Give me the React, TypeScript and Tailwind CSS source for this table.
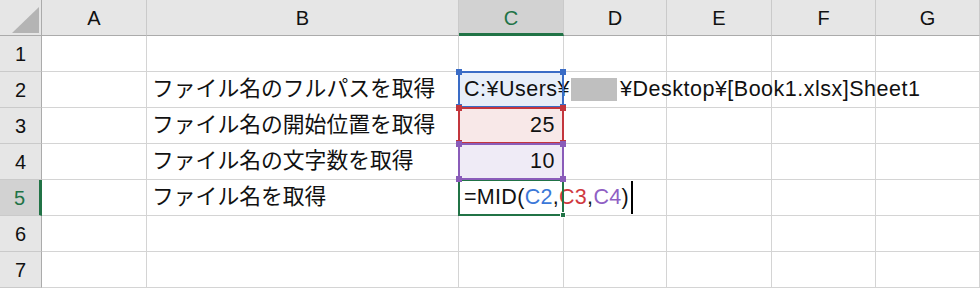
const cols = ["A", "B", "C", "D", "E", "F", "G"];
const rows = [1, 2, 3, 4, 5, 6, 7];

const labels: Record<number, string> = {
  2: "ファイル名のフルパスを取得",
  3: "ファイル名の開始位置を取得",
  4: "ファイル名の文字数を取得",
  5: "ファイル名を取得",
};

// coloured range box drawn over a referenced cell, with its four corner handles
function RangeBox({ border, handle }: { border: string; handle: string }) {
  return (
    <div className={`pointer-events-none absolute -inset-px z-10 border-2 ${border}`}>
      <span className={`absolute -left-[4px] -top-[4px] h-[6px] w-[6px] ${handle}`} />
      <span className={`absolute -right-[4px] -top-[4px] h-[6px] w-[6px] ${handle}`} />
      <span className={`absolute -bottom-[4px] -left-[4px] h-[6px] w-[6px] ${handle}`} />
      <span className={`absolute -bottom-[4px] -right-[4px] h-[6px] w-[6px] ${handle}`} />
    </div>
  );
}

function CellC({ row }: { row: number }) {
  if (row === 2) {
    return (
      <div className="relative flex items-center whitespace-nowrap border-b border-r border-[#d4d4d4] bg-[#e7eef9] pl-[5px] tracking-[0.5px]">
        <span className="shrink-0">C:¥Users¥</span>
        <span className="ml-[1px] mr-[3px] inline-block h-[23px] w-[46px] shrink-0 bg-[#bfbfbf]" />
        <span className="shrink-0">¥Desktop¥[Book1.xlsx]Sheet1</span>
        <RangeBox border="border-[#3a6cc6]" handle="bg-[#3a6cc6]" />
      </div>
    );
  }
  if (row === 3) {
    return (
      <div className="relative flex items-center justify-end border-b border-r border-[#d4d4d4] bg-[#f8e8e8] pr-[8px] tracking-[0.5px]">
        25
        <RangeBox border="border-[#c3363d]" handle="bg-[#c3363d]" />
      </div>
    );
  }
  if (row === 4) {
    return (
      <div className="relative flex items-center justify-end border-b border-r border-[#d4d4d4] bg-[#efebf6] pr-[8px] tracking-[0.5px]">
        10
        <RangeBox border="border-[#8a5cb9]" handle="bg-[#8a5cb9]" />
      </div>
    );
  }
  if (row === 5) {
    return (
      <div className="relative flex items-center whitespace-nowrap border-b border-r border-[#d4d4d4] pl-[5px] tracking-[0.3px]">
        <span className="shrink-0">=MID(</span>
        <span className="shrink-0 text-[#3b78d8]">C2</span>
        <span className="shrink-0">,</span>
        <span className="shrink-0 text-[#d0393f]">C3</span>
        <span className="shrink-0">,</span>
        <span className="shrink-0 text-[#9060c4]">C4</span>
        <span className="shrink-0">)</span>
        <span className="ml-[2px] inline-block h-[33px] w-[2px] shrink-0 bg-black" />
        {/* active cell frame and fill handle */}
        <div className="pointer-events-none absolute -inset-px z-0 border-2 border-[#217346]">
          <span className="absolute -bottom-[4px] -right-[4px] h-[6px] w-[6px] border border-white bg-[#217346]" />
        </div>
      </div>
    );
  }
  return <div className="border-b border-r border-[#d4d4d4]" />;
}

export default function App() {
  return (
    <div className="h-[289px] w-[980px] overflow-hidden bg-white font-['Liberation_Sans','Noto_Sans_CJK_JP',sans-serif] text-[21.5px] text-[#111]">
      <div className="grid grid-cols-[42px_105px_312px_105px_103px_105px_104px_104px] grid-rows-[repeat(8,36px)]">
        {/* corner */}
        <div className="relative border-b border-r border-[#ababab] bg-[#e6e6e6]">
          <svg className="absolute left-[12px] top-[7px]" width="27" height="26" viewBox="0 0 27 26">
            <polygon points="27,0 27,26 0,26" fill="#b4b4b4" />
          </svg>
        </div>
        {cols.map((c) =>
          c === "C" ? (
            <div
              key={c}
              className="flex items-center justify-center border-r border-b-[3px] border-r-[#cacaca] border-b-[#217346] bg-[#d2d2d2] pt-[2px] text-[20px] text-[#217346]"
            >
              {c}
            </div>
          ) : (
            <div
              key={c}
              className="flex items-center justify-center border-b border-r border-b-[#ababab] border-r-[#cacaca] bg-[#e6e6e6] text-[20px]"
            >
              {c}
            </div>
          )
        )}

        {rows.map((r) => [
          r === 5 ? (
            <div
              key={`h${r}`}
              className="flex items-center justify-center border-b border-r-[3px] border-b-[#cacaca] border-r-[#217346] bg-[#d2d2d2] text-[20px] text-[#217346]"
            >
              {r}
            </div>
          ) : (
            <div
              key={`h${r}`}
              className="flex items-center justify-center border-b border-r border-b-[#cacaca] border-r-[#ababab] bg-[#e6e6e6] text-[20px]"
            >
              {r}
            </div>
          ),
          <div key={`a${r}`} className="border-b border-r border-[#d4d4d4]" />,
          <div
            key={`b${r}`}
            className="flex items-center whitespace-nowrap border-b border-r border-[#d4d4d4] pl-[5px] text-[21.8px]"
          >
            {labels[r] ?? ""}
          </div>,
          <CellC key={`c${r}`} row={r} />,
          <div key={`d${r}`} className="border-b border-r border-[#d4d4d4]" />,
          <div key={`e${r}`} className="border-b border-r border-[#d4d4d4]" />,
          <div key={`f${r}`} className="border-b border-r border-[#d4d4d4]" />,
          <div key={`g${r}`} className="border-b border-r border-[#d4d4d4]" />,
        ])}
      </div>
    </div>
  );
}
